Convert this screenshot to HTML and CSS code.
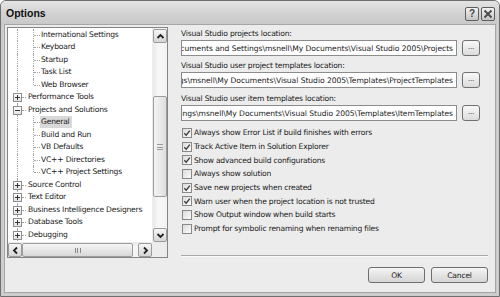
FILE: index.html
```html
<!DOCTYPE html>
<html>
<head>
<meta charset="utf-8">
<link rel="stylesheet" href="styles.css">
</head>
<body>
<div class="window">
  <div class="titlebar">
    <span class="title">Options</span>
    <div class="tb-buttons">
      <span class="tb-btn help">?</span>
      <span class="tb-btn close"><svg width="10" height="10" viewBox="0 0 10 10"><path d="M1.5 1.5 L8.5 8.5 M8.5 1.5 L1.5 8.5" stroke="#4a4a4a" stroke-width="1.8" fill="none"/></svg></span>
    </div>
  </div>
  <div class="face">
    <div class="main">
      <div class="tree">
        <div class="tree-view">
          <div class="tree-content">
            <div class="node"><span class="g v"></span><span class="g2 branch"></span><span class="lbl">International Settings</span></div>
            <div class="node"><span class="g v"></span><span class="g2 branch"></span><span class="lbl">Keyboard</span></div>
            <div class="node"><span class="g v"></span><span class="g2 branch"></span><span class="lbl">Startup</span></div>
            <div class="node"><span class="g v"></span><span class="g2 branch"></span><span class="lbl">Task List</span></div>
            <div class="node"><span class="g v"></span><span class="g2 branch last"></span><span class="lbl">Web Browser</span></div>
            <div class="node top"><span class="g v exp"><span class="box"><svg width="9" height="9" viewBox="0 0 9 9"><path d="M2 4.5 H7 M4.5 2 V7" stroke="#333" stroke-width="1"/></svg></span></span><span class="lbl">Performance Tools</span></div>
            <div class="node top"><span class="g v exp"><span class="box"><svg width="9" height="9" viewBox="0 0 9 9"><path d="M2 4.5 H7" stroke="#333" stroke-width="1"/></svg></span></span><span class="lbl">Projects and Solutions</span></div>
            <div class="node"><span class="g v"></span><span class="g2 branch"></span><span class="lbl sel">General</span></div>
            <div class="node"><span class="g v"></span><span class="g2 branch"></span><span class="lbl">Build and Run</span></div>
            <div class="node"><span class="g v"></span><span class="g2 branch"></span><span class="lbl">VB Defaults</span></div>
            <div class="node"><span class="g v"></span><span class="g2 branch"></span><span class="lbl">VC++ Directories</span></div>
            <div class="node"><span class="g v"></span><span class="g2 branch last"></span><span class="lbl">VC++ Project Settings</span></div>
            <div class="node top"><span class="g v exp"><span class="box"><svg width="9" height="9" viewBox="0 0 9 9"><path d="M2 4.5 H7 M4.5 2 V7" stroke="#333" stroke-width="1"/></svg></span></span><span class="lbl">Source Control</span></div>
            <div class="node top"><span class="g v exp"><span class="box"><svg width="9" height="9" viewBox="0 0 9 9"><path d="M2 4.5 H7 M4.5 2 V7" stroke="#333" stroke-width="1"/></svg></span></span><span class="lbl">Text Editor</span></div>
            <div class="node top"><span class="g v exp"><span class="box"><svg width="9" height="9" viewBox="0 0 9 9"><path d="M2 4.5 H7 M4.5 2 V7" stroke="#333" stroke-width="1"/></svg></span></span><span class="lbl">Business Intelligence Designers</span></div>
            <div class="node top"><span class="g v exp"><span class="box"><svg width="9" height="9" viewBox="0 0 9 9"><path d="M2 4.5 H7 M4.5 2 V7" stroke="#333" stroke-width="1"/></svg></span></span><span class="lbl">Database Tools</span></div>
            <div class="node top"><span class="g v exp"><span class="box"><svg width="9" height="9" viewBox="0 0 9 9"><path d="M2 4.5 H7 M4.5 2 V7" stroke="#333" stroke-width="1"/></svg></span></span><span class="lbl">Debugging</span></div>
          </div>
          <div class="vscroll">
            <span class="sb-btn"><svg width="9" height="9" viewBox="0 0 9 9"><path d="M1.5 6 L4.5 3 L7.5 6" stroke="#222" stroke-width="1.8" fill="none"/></svg></span>
            <div class="vtrack"><div class="vthumb"><span class="grip-v"></span></div></div>
            <span class="sb-btn"><svg width="9" height="9" viewBox="0 0 9 9"><path d="M1.5 3 L4.5 6 L7.5 3" stroke="#222" stroke-width="1.8" fill="none"/></svg></span>
          </div>
        </div>
        <div class="hscroll-row">
          <div class="hscroll">
            <span class="sb-btn"><svg width="9" height="9" viewBox="0 0 9 9"><path d="M6 1.5 L3 4.5 L6 7.5" stroke="#222" stroke-width="1.8" fill="none"/></svg></span>
            <div class="htrack"><div class="hthumb"><span class="grip-h"></span></div></div>
            <span class="sb-btn"><svg width="9" height="9" viewBox="0 0 9 9"><path d="M3 1.5 L6 4.5 L3 7.5" stroke="#222" stroke-width="1.8" fill="none"/></svg></span>
          </div>
          <div class="corner"></div>
        </div>
      </div>
      <div class="panel">
        <div class="flabel first">Visual Studio projects location:</div>
        <div class="frow">
          <div class="tbox"><span>C:\Documents and Settings\msnell\My Documents\Visual Studio 2005\Projects</span></div>
          <span class="dots">...</span>
        </div>
        <div class="flabel">Visual Studio user project templates location:</div>
        <div class="frow">
          <div class="tbox"><span>C:\Documents and Settings\msnell\My Documents\Visual Studio 2005\Templates\ProjectTemplates</span></div>
          <span class="dots">...</span>
        </div>
        <div class="flabel third">Visual Studio user item templates location:</div>
        <div class="frow">
          <div class="tbox"><span>C:\Documents and Settings\msnell\My Documents\Visual Studio 2005\Templates\ItemTemplates</span></div>
          <span class="dots">...</span>
        </div>
        <div class="checks">
          <div class="chk on"><span class="cb"><svg width="8" height="8" viewBox="0 0 8 8"><path d="M1.3 4.2 L3.2 6.2 L6.8 1.6" stroke="#3a3a3a" stroke-width="1.3" fill="none"/></svg></span>Always show Error List if build finishes with errors</div>
          <div class="chk on"><span class="cb"><svg width="8" height="8" viewBox="0 0 8 8"><path d="M1.3 4.2 L3.2 6.2 L6.8 1.6" stroke="#3a3a3a" stroke-width="1.3" fill="none"/></svg></span>Track Active Item in Solution Explorer</div>
          <div class="chk on"><span class="cb"><svg width="8" height="8" viewBox="0 0 8 8"><path d="M1.3 4.2 L3.2 6.2 L6.8 1.6" stroke="#3a3a3a" stroke-width="1.3" fill="none"/></svg></span>Show advanced build configurations</div>
          <div class="chk"><span class="cb"></span>Always show solution</div>
          <div class="chk on"><span class="cb"><svg width="8" height="8" viewBox="0 0 8 8"><path d="M1.3 4.2 L3.2 6.2 L6.8 1.6" stroke="#3a3a3a" stroke-width="1.3" fill="none"/></svg></span>Save new projects when created</div>
          <div class="chk on"><span class="cb"><svg width="8" height="8" viewBox="0 0 8 8"><path d="M1.3 4.2 L3.2 6.2 L6.8 1.6" stroke="#3a3a3a" stroke-width="1.3" fill="none"/></svg></span>Warn user when the project location is not trusted</div>
          <div class="chk"><span class="cb"></span>Show Output window when build starts</div>
          <div class="chk"><span class="cb"></span>Prompt for symbolic renaming when renaming files</div>
        </div>
        <div class="sep"></div>
      </div>
    </div>
    <div class="footer">
      <span class="btn">OK</span>
      <span class="btn">Cancel</span>
    </div>
  </div>
</div>
</body>
</html>
```
FILE: styles.css
```css
* { box-sizing: border-box; }
html, body { margin: 0; padding: 0; background: #fff; }
body { font-family: "DejaVu Sans", "Liberation Sans", sans-serif; font-size: 7.6px; letter-spacing: -0.2px; color: #1a1a1a; }

.window {
  width: 500px; height: 297px;
  border: 1px solid #6f6f6f;
  border-radius: 6px 6px 0 0;
  background: #cdcdcd;
  padding: 0 3px 3px 3px;
  display: flex; flex-direction: column;
  overflow: hidden;
}
.titlebar {
  height: 23px; flex: none;
  margin: 0 -3px;
  padding: 0 4px 0 5px;
  display: flex; align-items: center; justify-content: space-between;
  background: linear-gradient(#e4e4e4, #d2d2d2 55%, #c9c9c9);
}
.title { font-family: "Liberation Sans", Arial, sans-serif; font-weight: bold; font-size: 10.5px; letter-spacing: 0; color: #111; padding-top: 1px; }
.tb-buttons { display: flex; gap: 2px; padding-top: 2px; }
.tb-btn {
  width: 14px; height: 14px;
  border: 1px solid #5e5e5e; border-radius: 2px;
  background: linear-gradient(#f2f2f2, #c4c4c4);
  display: flex; align-items: center; justify-content: center;
  font-family: "Liberation Sans", Arial, sans-serif;
  font-weight: bold; font-size: 10px; color: #444; letter-spacing: 0;
}

.face {
  flex: 1;
  background: #ececec;
  border: 1px solid #a6a6a6;
  padding: 2px 7px 0 2px;
  display: flex; flex-direction: column;
}
.main { display: flex; gap: 13px; height: 231px; flex: none; }

.tree {
  width: 161px; height: 231px; flex: none;
  border: 1px solid #848484;
  background: #fff;
  display: flex; flex-direction: column;
}
.tree-view { flex: 1; display: flex; min-height: 0; }
.tree-content { flex: 1; padding: 0.5px 0 0 2px; overflow: hidden; }
.node { height: 12.5px; display: flex; align-items: center; white-space: nowrap; }
.g, .g2 { align-self: stretch; flex: none; position: relative; }
.g { width: 16px; }
.g2 { width: 14px; }
.g.v::before {
  content: ""; position: absolute; left: 7px; top: 0; bottom: 0;
  border-left: 1px dotted #a5a5a5;
}
.g2.branch::before {
  content: ""; position: absolute; left: 7px; top: 0; bottom: 0;
  border-left: 1px dotted #a5a5a5;
}
.g2.branch.last::before { bottom: 50%; }
.g2.branch::after {
  content: ""; position: absolute; left: 8px; right: 0; top: 50%;
  border-top: 1px dotted #a5a5a5;
}
.g.exp::after {
  content: ""; position: absolute; left: 12px; right: 0; top: 50%;
  border-top: 1px dotted #a5a5a5;
}
.box {
  position: absolute; left: 3px; top: 2px;
  width: 9px; height: 9px;
  border: 1px solid #8e8e8e;
  background: linear-gradient(#ffffff, #e3e3e3);
  display: flex; z-index: 1;
}
.box svg { margin: -1px; }
.lbl { padding: 0 1px; line-height: 12px; }
.top .lbl { margin-left: 1px; }
.lbl.sel { background: #d9d9d9; padding: 0 2px 0 1px; }

.vscroll {
  width: 15px; flex: none;
  display: flex; flex-direction: column;
  background: linear-gradient(90deg, #e9e9e9, #f7f7f7 40%, #f2f2f2);
  border-left: 1px solid #ededed;
}
.sb-btn {
  width: 14px; height: 14px; flex: none;
  border: 1px solid #9a9a9a; border-radius: 2px;
  background: linear-gradient(#f6f6f6, #d6d6d6);
  display: flex; align-items: center; justify-content: center;
}
.vscroll .sb-btn { margin: 1px 0 0 0; }
.vtrack { flex: 1; display: flex; flex-direction: column; }
.vthumb {
  margin-top: 53px; height: 101px;
  border: 1px solid #9d9d9d; border-radius: 2px;
  background: linear-gradient(90deg, #f4f4f4, #dedede);
  display: flex; align-items: center; justify-content: center;
}
.grip-v { width: 6px; height: 6px; border-top: 1px solid #9a9a9a; border-bottom: 1px solid #9a9a9a; position: relative; }
.grip-v::after { content: ""; position: absolute; left: 0; right: 0; top: 2px; border-top: 1px solid #9a9a9a; }

.hscroll-row { height: 15px; flex: none; display: flex; }
.hscroll {
  flex: 1; display: flex;
  background: linear-gradient(#e9e9e9, #f6f6f6 40%, #f1f1f1);
}
.hscroll .sb-btn { width: 14px; height: 14px; margin-top: 1px; }
.htrack { flex: 1; display: flex; }
.hthumb {
  width: 111px; margin-top: 1px; height: 14px;
  border: 1px solid #9d9d9d; border-radius: 2px;
  background: linear-gradient(#f6f6f6, #d8d8d8);
  display: flex; align-items: center; justify-content: center;
}
.grip-h { width: 6px; height: 5px; border-left: 1px solid #8a8a8a; border-right: 1px solid #8a8a8a; position: relative; }
.grip-h::after { content: ""; position: absolute; top: 0; bottom: 0; left: 1px; border-left: 1px solid #8a8a8a; }
.corner { width: 15px; flex: none; background: #ececec; }

.panel { flex: 1; display: flex; flex-direction: column; padding-top: 1px; min-width: 0; }
.flabel { height: 12px; line-height: 12px; white-space: nowrap; margin-top: 4px; }
.flabel.first { margin-top: 0; }
.flabel.third { margin-top: 5px; }
.frow { display: flex; gap: 5px; height: 16px; }
.tbox {
  width: 276px; height: 16px; flex: none;
  border: 1px solid #8c8c8c;
  background: #fff;
  display: flex; justify-content: flex-end; align-items: center;
  overflow: hidden; white-space: nowrap;
  padding-right: 3px;
  letter-spacing: -0.05px;
}
.tbox span { flex: none; }
.dots {
  width: 18px; height: 16px; flex: none;
  border: 1px solid #707070; border-radius: 3px;
  background: linear-gradient(#f8f8f8, #dcdcdc);
  display: flex; align-items: center; justify-content: center;
  font-size: 7px; padding-bottom: 2px; letter-spacing: -0.3px;
}
.checks { margin-top: 5px; }
.chk { height: 13.7px; display: flex; align-items: center; white-space: nowrap; }
.cb {
  width: 10px; height: 10px; flex: none;
  border: 1px solid #888; 
  background: linear-gradient(135deg, #dcdcdc, #fbfbfb);
  margin: 0 2px 0 1px;
  display: flex; align-items: center; justify-content: center;
}
.sep { margin-top: auto; border-top: 1px solid #a8a8a8; border-bottom: 1px solid #fbfbfb; margin-bottom: 1px; }

.footer { display: flex; justify-content: flex-end; gap: 6px; margin-top: 9px; }
.btn {
  width: 57px; height: 16px;
  border: 1px solid #6e6e6e; border-radius: 3px;
  background: linear-gradient(#f6f6f6, #e4e4e4 50%, #d5d5d5);
  display: flex; align-items: center; justify-content: center;
}
```
